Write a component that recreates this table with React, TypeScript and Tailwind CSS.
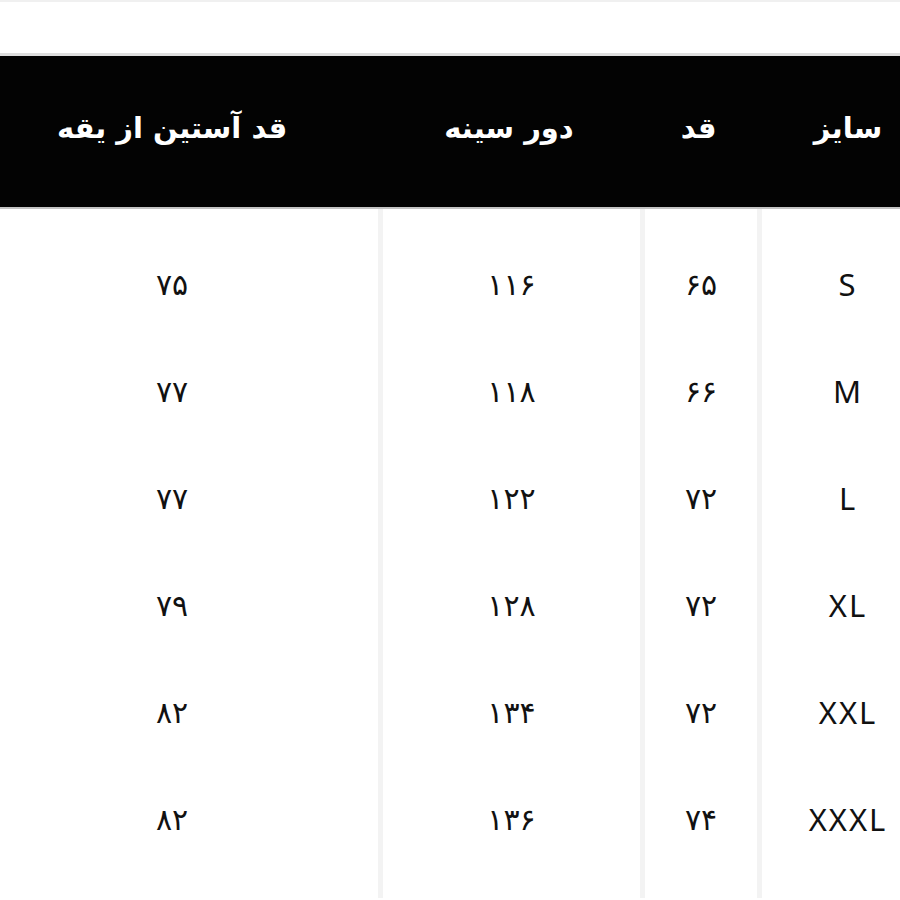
import React from "react";

const cols = [
  { title: "سایز", values: ["S", "M", "L", "XL", "XXL", "XXXL"], latin: true, head: "w-[143px] pl-[39px]", body: "w-[143px] pl-[34px] border-l-[5px]" },
  { title: "قد", values: ["۶۵", "۶۶", "۷۲", "۷۲", "۷۲", "۷۴"], latin: false, head: "w-[117px]", body: "w-[117px] border-l-[5px]" },
  { title: "دور سینه", values: ["۱۱۶", "۱۱۸", "۱۲۲", "۱۲۸", "۱۳۴", "۱۳۶"], latin: false, head: "w-[262px]", body: "w-[262px] border-l-[5px]" },
  { title: "قد آستین از یقه", values: ["۷۵", "۷۷", "۷۷", "۷۹", "۸۲", "۸۲"], latin: false, head: "flex-1 pr-[34px]", body: "flex-1 pr-[34px]" },
];

export default function App() {
  return (
    <div className="w-[900px] h-[900px] overflow-hidden bg-white" dir="rtl">
      <div className="h-[56px] bg-white border-t-[2px] border-t-[#f0f0f0] border-b-[3px] border-b-[#dedede]" />
      <div className="flex h-[153px] bg-[#030303] border-b-[2px] border-b-[#c4c4c4]">
        {cols.map((c, i) => (
          <div key={i} className={`flex items-center justify-center ${c.head}`}>
            <span
              className="text-white font-bold text-[29px] pb-[6px]"
              style={{ fontFamily: '"DejaVu Sans", sans-serif' }}
            >
              {c.title}
            </span>
          </div>
        ))}
      </div>
      <div className="flex h-[689px]">
        {cols.map((c, i) => (
          <div key={i} className={`flex flex-col pt-[22px] border-[#f3f3f3] ${c.body}`}>
            {c.values.map((v, j) => (
              <div key={j} className="h-[107px] flex items-center justify-center">
                {c.latin ? (
                  <span
                    className="text-[#111] text-[31px] tracking-[2px] leading-none"
                    style={{ fontFamily: '"Noto Sans", sans-serif' }}
                  >
                    {v}
                  </span>
                ) : (
                  <span
                    className="text-[#111] text-[30px] leading-none"
                    style={{ fontFamily: '"DejaVu Sans", sans-serif' }}
                  >
                    {v}
                  </span>
                )}
              </div>
            ))}
          </div>
        ))}
      </div>
    </div>
  );
}
